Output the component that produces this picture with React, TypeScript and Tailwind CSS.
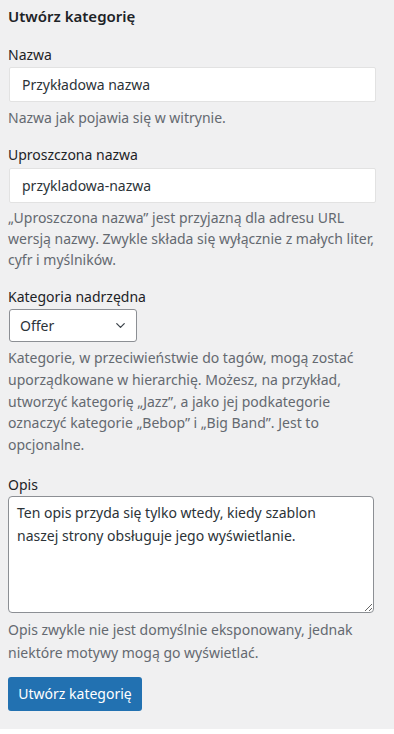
import { ChevronDown } from "lucide-react";

const font = { fontFamily: '"Noto Sans", "Open Sans", sans-serif' };

export default function App() {
  return (
    <div className="w-[394px] bg-white" style={font}>
      <div className="bg-[#f0f0f1] h-[729px] px-2 pt-[5px] text-[14px] text-[#1d2327]">
        <h2 className="text-[15px] font-semibold leading-[22px]">Utwórz kategorię</h2>

        <div className="mt-[17px]">
          <label className="block leading-[22px]">Nazwa</label>
          <input
            className="mt-[1px] ml-px block w-[367px] h-[35px] px-3 bg-white border border-[#e2e2e2] rounded-[2px] text-[#2c3338] outline-none"
            defaultValue="Przykładowa nazwa"
          />
          <p className="mt-[5px] leading-[21px] text-[#646970]">Nazwa jak pojawia się w witrynie.</p>
        </div>

        <div className="mt-[16px]">
          <label className="block leading-[22px]">Uproszczona nazwa</label>
          <input
            className="mt-[2px] ml-px block w-[367px] h-[35px] px-3 bg-white border border-[#e2e2e2] rounded-[2px] text-[#2c3338] outline-none"
            defaultValue="przykladowa-nazwa"
          />
          <p className="mt-[4px] leading-[21px] text-[#646970]">
            „Uproszczona nazwa” jest przyjazną dla adresu URL wersją nazwy. Zwykle składa się wyłącznie z małych liter, cyfr i myślników.
          </p>
        </div>

        <div className="mt-[16px]">
          <label className="block leading-[22px]">Kategoria nadrzędna</label>
          <div className="mt-[1px] ml-px flex items-center justify-between w-[128px] h-[33px] pl-[10px] pr-[8px] bg-white border border-[#8c8f94] rounded-[3px] text-[#2c3338]">
            <span>Offer</span>
            <ChevronDown size={15} strokeWidth={2} className="text-[#3c434a]" />
          </div>
          <p className="mt-[5px] leading-[21.75px] text-[#646970]">
            Kategorie, w przeciwieństwie do tagów, mogą zostać uporządkowane w hierarchię. Możesz, na przykład, utworzyć kategorię „Jazz”, a jako jej podkategorie oznaczyć kategorie „Bebop” i „Big Band”. Jest to opcjonalne.
          </p>
        </div>

        <div className="mt-[18px]">
          <label className="block leading-[22px]">Opis</label>
          <textarea
            className="block w-[366px] h-[117px] pl-2 pr-[36px] py-1 bg-white border border-[#8c8f94] rounded-[4px] text-[#2c3338] leading-[23px] outline-none resize-y"
            defaultValue="Ten opis przyda się tylko wtedy, kiedy szablon naszej strony obsługuje jego wyświetlanie."
          />
          <p className="mt-[5px] leading-[23px] text-[#646970]">
            Opis zwykle nie jest domyślnie eksponowany, jednak niektóre motywy mogą go wyświetlać.
          </p>
        </div>

        <button className="mt-[13px] h-[34px] w-[134px] bg-[#2271b1] text-white rounded-[3px] leading-[32px]">
          Utwórz kategorię
        </button>
      </div>
    </div>
  );
}
